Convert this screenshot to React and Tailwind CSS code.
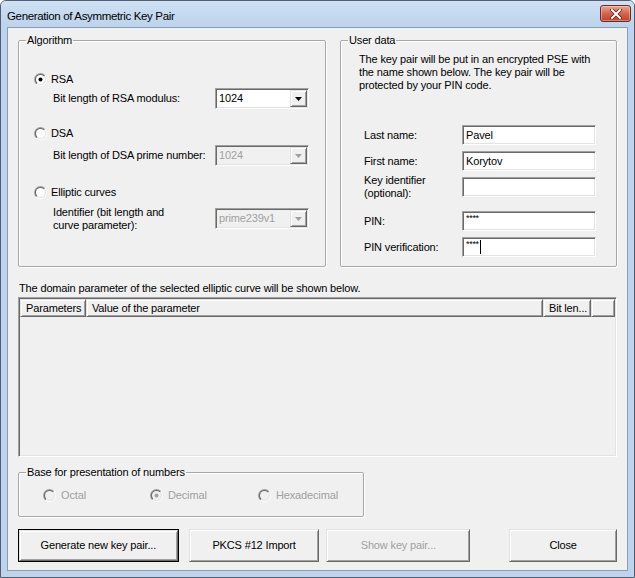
import { useId } from 'react';

const sunken =
  'border border-t-[#a0a0a0] border-l-[#a0a0a0] border-b-white border-r-white shadow-[inset_1px_1px_0_#696969,inset_-1px_-1px_0_#e3e3e3]';
const raised =
  'border border-t-[#e3e3e3] border-l-[#e3e3e3] border-b-[#696969] border-r-[#696969] shadow-[inset_1px_1px_0_#ffffff,inset_-1px_-1px_0_#a0a0a0]';

function Radio({ checked, disabled }) {
  const id = useId().replace(/:/g, '');
  return (
    <svg width="13" height="13" viewBox="0 0 13 13" className="shrink-0">
      <defs>
        <linearGradient id={`o${id}`} x1="0" y1="0" x2="1" y2="1">
          <stop offset="0.5" stopColor="#a0a0a0" />
          <stop offset="0.5" stopColor="#ffffff" />
        </linearGradient>
        <linearGradient id={`i${id}`} x1="0" y1="0" x2="1" y2="1">
          <stop offset="0.5" stopColor="#696969" />
          <stop offset="0.5" stopColor="#e3e3e3" />
        </linearGradient>
      </defs>
      <circle cx="6.5" cy="6.5" r="6.5" fill={`url(#o${id})`} />
      <circle cx="6.5" cy="6.5" r="5.5" fill={`url(#i${id})`} />
      <circle cx="6.5" cy="6.5" r="4.5" fill={disabled ? '#f0f0f0' : '#ffffff'} />
      {checked && <circle cx="6.5" cy="6.5" r="2" fill={disabled ? '#a0a0a0' : '#000000'} />}
    </svg>
  );
}

function Combo({ value, disabled }) {
  return (
    <div className={`flex h-[21px] w-[94px] p-[1px] ${sunken} ${disabled ? 'bg-[#f0f0f0]' : 'bg-white'}`}>
      <div className={`flex flex-1 items-center pl-[2px] ${disabled ? 'text-[#a0a0a0]' : 'text-black'}`}>{value}</div>
      <div className={`flex w-[17px] items-center justify-center bg-[#f0f0f0] ${raised}`}>
        <svg width="7" height="4" viewBox="0 0 7 4">
          <polygon points="0,0 7,0 3.5,4" fill={disabled ? '#a0a0a0' : '#000000'} />
        </svg>
      </div>
    </div>
  );
}

function Field({ value, caret, small }) {
  return (
    <div className={`flex h-[20px] w-[134px] items-center bg-white pl-[3px] ${sunken}`}>
      <span className={small ? 'relative -top-[3px] text-[9px] leading-none tracking-[-0.3px]' : ''}>{value}</span>
      {caret && <span className="ml-[1px] h-[14px] w-[1px] bg-black" />}
    </div>
  );
}

function Btn({ children, className, disabled, primary }) {
  const inner = (
    <div
      className={`flex h-full w-full items-center justify-center bg-[#f0f0f0] ${raised} ${
        disabled ? 'text-[#a0a0a0]' : 'text-black'
      }`}
    >
      {children}
    </div>
  );
  return primary ? (
    <div className={`h-[33px] border border-black ${className}`}>{inner}</div>
  ) : (
    <div className={`h-[33px] ${className}`}>{inner}</div>
  );
}

function Group({ title, className, children }) {
  return (
    <fieldset
      className={`rounded-[2px] border border-[#a8a8a8] shadow-[inset_1px_1px_0_#ffffff,1px_1px_0_#ffffff] ${className}`}
    >
      <legend className="ml-[7px] px-[1px] leading-[13px]">{title}</legend>
      {children}
    </fieldset>
  );
}

export default function App() {
  return (
    <div className="flex h-[578px] w-[635px] flex-col rounded-t-[6px] border border-[#515f72] bg-[#bed4ec] font-['Liberation_Sans',sans-serif] text-[11px] leading-[13px] tracking-[-0.15px] text-black">
      {/* Title bar */}
      <div className="flex h-[26px] shrink-0 items-start justify-between rounded-t-[5px] bg-gradient-to-b from-[#cfe0f3] to-[#bcd3ec]">
        <div className="mt-[8px] pl-[6px] text-[11.5px] leading-[14px] tracking-[-0.35px] text-black">
          Generation of Asymmetric Key Pair
        </div>
        <div className="mr-[3px] mt-[4px] flex h-[17px] w-[31px] items-center justify-center rounded-[3px] border border-[#6b2a20] bg-gradient-to-b from-[#e9a592] via-[#d5644d] to-[#c1412b] shadow-[inset_0_0_0_1px_rgba(255,255,255,0.35)]">
          <svg width="12" height="10" viewBox="0 0 12 10">
            <path d="M2 1 L10 9 M10 1 L2 9" stroke="#5a2418" strokeWidth="3.6" strokeLinecap="square" />
            <path d="M2 1 L10 9 M10 1 L2 9" stroke="#ffffff" strokeWidth="2" strokeLinecap="square" />
          </svg>
        </div>
      </div>

      {/* Client area */}
      <div className="mx-[6px] mb-[6px] flex flex-1 flex-col border border-[#8d9db1] bg-[#f0f0f0] px-[10px] pt-[6px]">
        <div className="flex gap-[14px]">
          <Group title="Algorithm" className="h-[233px] w-[308px]">
            <div className="mt-[25px] flex h-[14px] items-center gap-[4px] pl-[15px]">
              <Radio checked />
              <span>RSA</span>
            </div>
            <div className="mt-[2px] flex h-[21px] items-center pl-[34px]">
              <span className="w-[162px]">Bit length of RSA modulus:</span>
              <Combo value="1024" />
            </div>
            <div className="mt-[17px] flex h-[14px] items-center gap-[4px] pl-[15px]">
              <Radio />
              <span>DSA</span>
            </div>
            <div className="mt-[5px] flex h-[21px] items-center pl-[34px]">
              <span className="w-[162px]">Bit length of DSA prime number:</span>
              <Combo value="1024" disabled />
            </div>
            <div className="mt-[19px] flex h-[14px] items-center gap-[4px] pl-[15px]">
              <Radio />
              <span>Elliptic curves</span>
            </div>
            <div className="mt-[9px] flex h-[21px] items-center pl-[34px]">
              <span className="w-[162px]">
                Identifier (bit length and
                <br />
                curve parameter):
              </span>
              <Combo value="prime239v1" disabled />
            </div>
          </Group>

          <Group title="User data" className="h-[233px] w-[277px]">
            <p className="mt-[6px] pl-[18px] pr-[10px]">
              The key pair will be put in an encrypted PSE with the name shown below. The key pair will be protected by
              your PIN code.
            </p>
            <div className="mt-[33px] flex h-[20px] items-center pl-[23px]">
              <span className="w-[98px]">Last name:</span>
              <Field value="Pavel" />
            </div>
            <div className="mt-[6px] flex h-[20px] items-center pl-[23px]">
              <span className="w-[98px]">First name:</span>
              <Field value="Korytov" />
            </div>
            <div className="mt-[6px] flex h-[20px] items-center pl-[23px]">
              <span className="w-[98px]">
                Key identifier
                <br />
                (optional):
              </span>
              <Field value="" />
            </div>
            <div className="mt-[14px] flex h-[20px] items-center pl-[23px]">
              <span className="w-[98px]">PIN:</span>
              <Field value="****" small />
            </div>
            <div className="mt-[6px] flex h-[20px] items-center pl-[23px]">
              <span className="w-[98px]">PIN verification:</span>
              <Field value="****" small caret />
            </div>
          </Group>
        </div>

        <div className="mt-[15px] pl-[1px]">The domain parameter of the selected elliptic curve will be shown below.</div>

        {/* List view */}
        <div className={`mt-[2px] h-[160px] w-[599px] bg-[#f0f0f0] p-[1px] ${sunken}`}>
          <div className="flex h-[18px]">
            <div className={`flex w-[66px] items-center pl-[5px] ${raised}`}>Parameters</div>
            <div className={`flex w-[457px] items-center pl-[5px] ${raised}`}>Value of the parameter</div>
            <div className={`flex w-[48px] items-center pl-[5px] ${raised}`}>Bit len...</div>
            <div className={`flex-1 ${raised}`} />
          </div>
        </div>

        <Group title="Base for presentation of numbers" className="mt-[9px] h-[51px] w-[346px]">
          <div className="mt-[9px] flex h-[14px] items-center pl-[24px] text-[#a0a0a0]">
            <div className="flex w-[107px] items-center gap-[5px]">
              <Radio disabled />
              <span>Octal</span>
            </div>
            <div className="flex w-[108px] items-center gap-[5px]">
              <Radio checked disabled />
              <span>Decimal</span>
            </div>
            <div className="flex items-center gap-[5px]">
              <Radio disabled />
              <span>Hexadecimal</span>
            </div>
          </div>
        </Group>

        <div className="mt-[12px] flex">
          <Btn primary className="w-[161px]">Generate new key pair...</Btn>
          <Btn className="ml-[10px] w-[131px]">PKCS #12 Import</Btn>
          <Btn disabled className="ml-[7px] w-[144px]">Show key pair...</Btn>
          <Btn className="ml-[39px] w-[108px]">Close</Btn>
        </div>
      </div>
    </div>
  );
}
